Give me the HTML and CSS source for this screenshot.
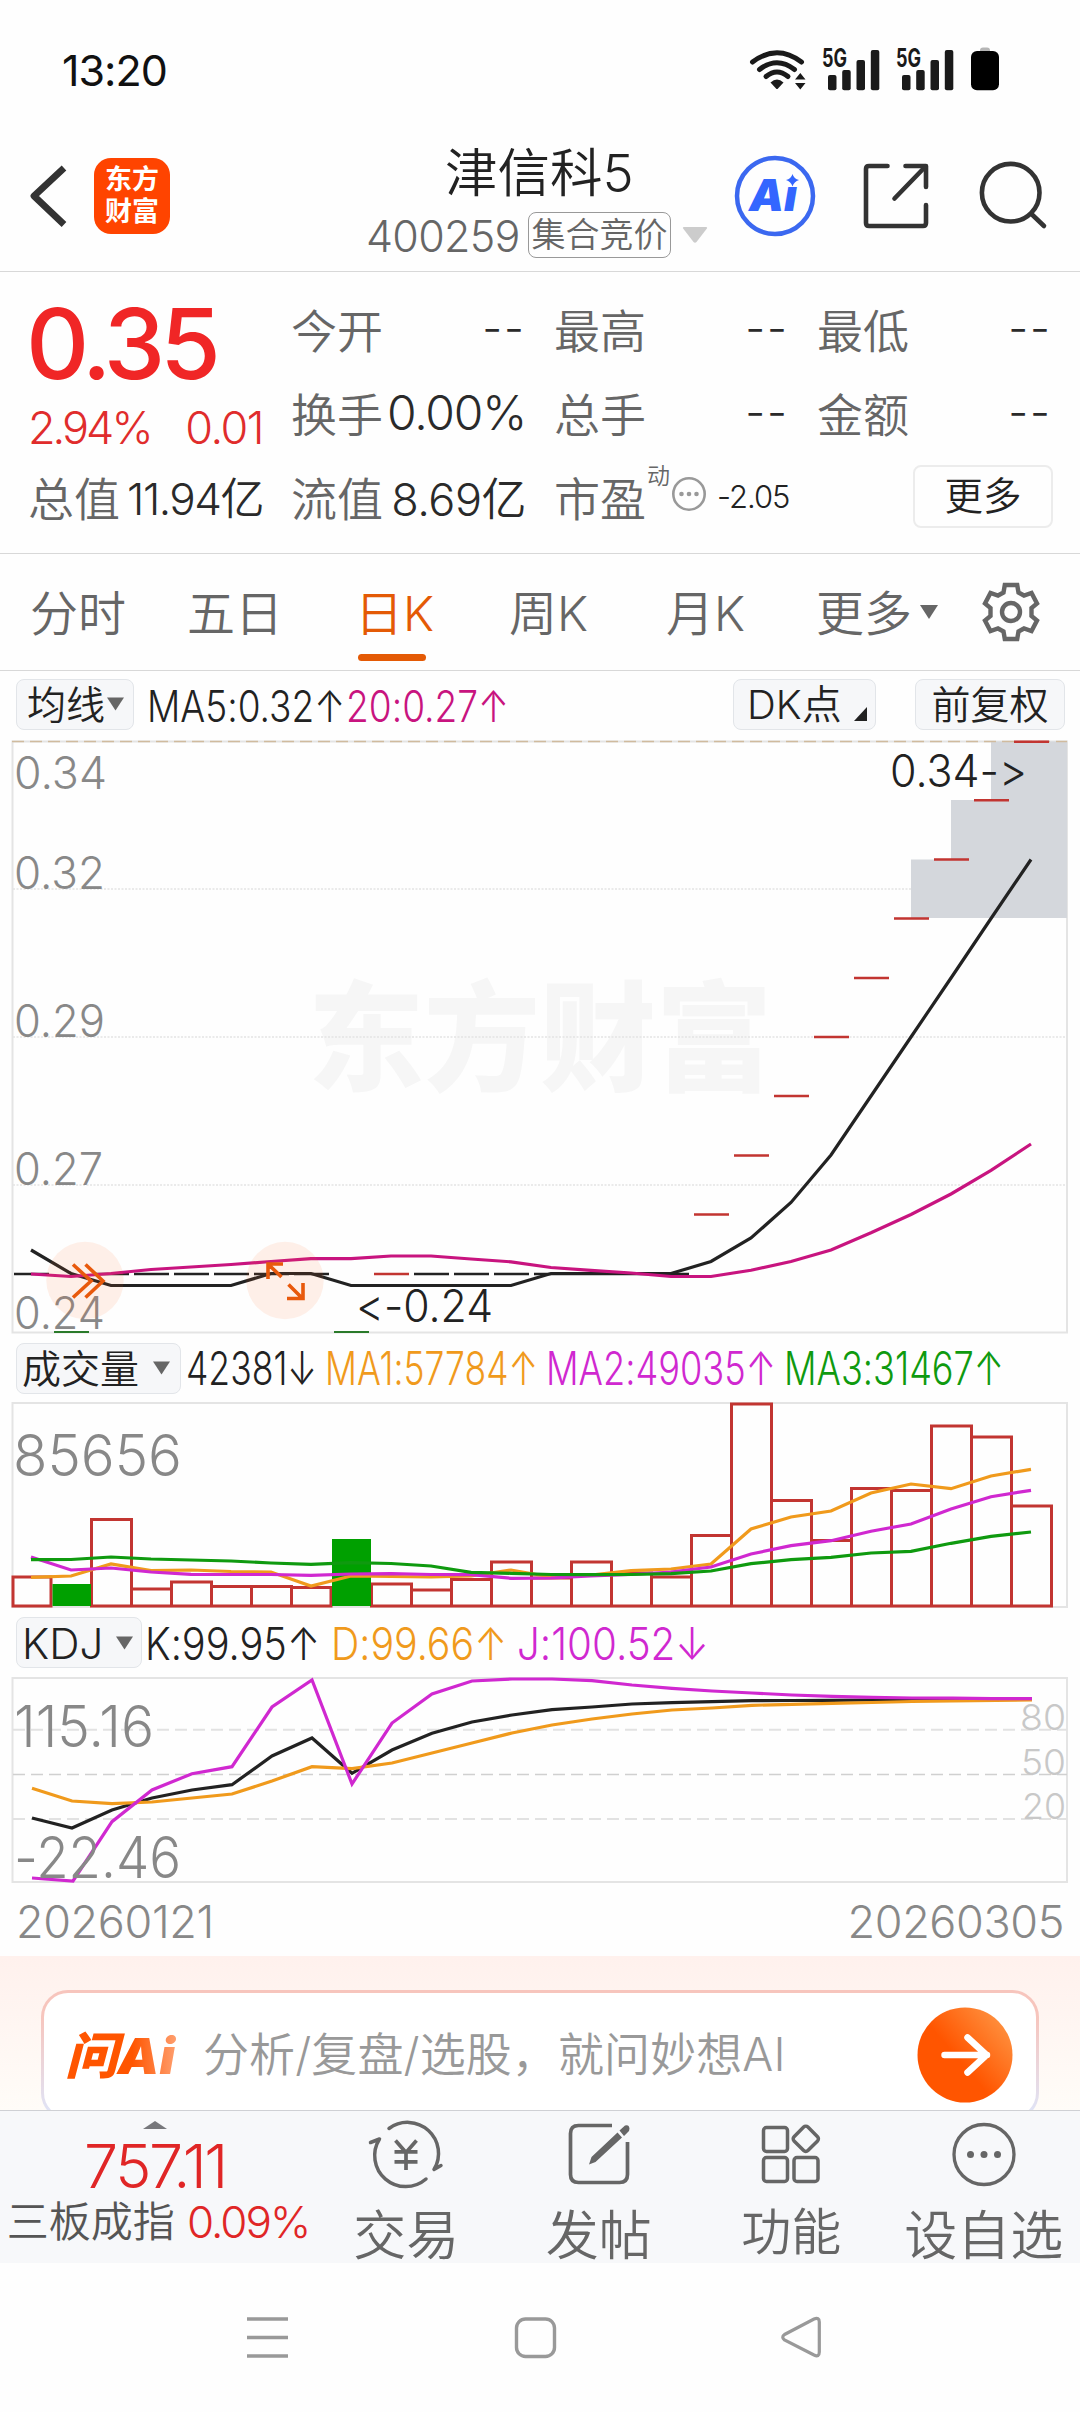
FILE: index.html
```html
<!DOCTYPE html>
<html lang="zh-CN">
<head>
<meta charset="utf-8">
<title>津信科5 400259</title>
<link rel="stylesheet" href="styles.css">
</head>
<body>
<div class="page">
  <div class="status">
    <span class="clock">13:20</span>
    <svg class="status-icons" viewBox="745 40 260 60" width="260" height="60">
      <g fill="none" stroke="#1a1a1a" stroke-width="5" stroke-linecap="round">
        <path d="M752.500 62 Q777 43.500 801.500 62"/><path d="M759.500 69.500 Q777 56 794.500 69.500"/><path d="M766 76.500 Q777 67.500 788 76.500"/>
      </g>
      <path d="M770.500 82.500 Q777 76.500 783.500 82.500 L778 88.500 Q777 89.500 776 88.500Z" fill="#1a1a1a"/>
      <path d="M800.300 73 L805.500 79.500 H795Z M795 83 H805.500 L800.300 89.500Z" fill="#1a1a1a"/>
      <g fill="#1a1a1a">
        <text x="822" y="67" class="net" textLength="25" lengthAdjust="spacingAndGlyphs">5G</text>
        <rect x="828" y="75" width="8.500" height="15.300" rx="2"/><rect x="842.200" y="70" width="8.500" height="20.300" rx="2"/><rect x="856.500" y="60" width="8.500" height="30.300" rx="2"/><rect x="870.800" y="50" width="8.500" height="40.300" rx="2"/>
        <text x="896" y="67" class="net" textLength="25" lengthAdjust="spacingAndGlyphs">5G</text>
        <rect x="902" y="75" width="8.500" height="15.300" rx="2"/><rect x="916.200" y="70" width="8.500" height="20.300" rx="2"/><rect x="930.500" y="60" width="8.500" height="30.300" rx="2"/><rect x="944.800" y="50" width="8.500" height="40.300" rx="2"/>
      </g>
      <rect x="980" y="47.500" width="10" height="7" rx="3" fill="#b5b5b5"/>
      <rect x="971" y="51" width="28" height="39.300" rx="6" fill="#000"/>
    </svg>
  </div>

  <header class="header">
    <svg class="back" viewBox="26 160 44 72" width="44" height="72"><path d="M64 168 L34 196 L64 224.500" fill="none" stroke="#333" stroke-width="6.800" stroke-linejoin="round"/></svg>
    <div class="brand"><span>东方</span><span>财富</span></div>
    <div class="title">
      <div class="name">津信科5</div>
      <div class="code-row"><span class="code">400259</span><span class="badge">集合竞价</span>
        <svg width="26" height="18" viewBox="0 0 26 18"><path d="M2 1 H24 Q26 1 24.500 3 L14.500 16 Q13 17.500 11.500 16 L1.500 3 Q0 1 2 1Z" fill="#ccc"/></svg></div>
    </div>
    <svg class="actions" viewBox="730 150 320 92" width="320" height="92">
      <circle cx="775" cy="196" r="38" fill="none" stroke="#3b68f0" stroke-width="4.500"/>
      <text x="749" y="210.500" class="ai-mark" textLength="48" lengthAdjust="spacingAndGlyphs">Aı</text>
      <path d="M792.500 174 Q794 179 799 180 Q794 181.500 792.500 186.500 Q791 181.500 786 180 Q791 179 792.500 174Z" fill="#3366ff"/>
      <g fill="none" stroke="#333" stroke-width="4.600" stroke-linecap="round" stroke-linejoin="round">
        <path d="M887.500 166 H869 Q866 166 866 169 V223 Q866 226 869 226 H923 Q926 226 926 223 V205"/>
        <path d="M905.500 166 H926 V187"/><path d="M894.500 198.500 L925 167"/>
        <circle cx="1010.700" cy="192.700" r="28.800"/><path d="M1032 214.500 L1044 226"/>
      </g>
    </svg>
  </header>

  <section class="quote">
    <div class="price-block">
      <div class="price">0.35</div>
      <div class="change"><span>2.94%</span><span class="diff">0.01</span></div>
    </div>
    <div class="cell"><span class="k">今开</span><span class="dash">--</span></div>
    <div class="cell"><span class="k">最高</span><span class="dash">--</span></div>
    <div class="cell"><span class="k">最低</span><span class="dash">--</span></div>
    <div class="cell"><span class="k">换手</span><span class="v rate">0.00%</span></div>
    <div class="cell"><span class="k">总手</span><span class="dash">--</span></div>
    <div class="cell"><span class="k">金额</span><span class="dash">--</span></div>
    <div class="cell"><span class="k">总值</span><span class="v">11.94亿</span></div>
    <div class="cell"><span class="k">流值</span><span class="v wide">8.69亿</span></div>
    <div class="cell pe"><span class="k">市盈</span><span class="sup">动</span>
      <svg width="36" height="36" viewBox="0 0 36 36"><circle cx="18" cy="18" r="15.700" fill="none" stroke="#999" stroke-width="2.600"/><g fill="#999"><circle cx="10.500" cy="18" r="2.300"/><circle cx="18" cy="18" r="2.300"/><circle cx="25.500" cy="18" r="2.300"/></g></svg>
      <span class="pe-val">-2.05</span></div>
    <div class="cell end"><span class="more">更多</span></div>
  </section>

  <nav class="tabs">
    <span class="tab">分时</span><span class="tab">五日</span><span class="tab on">日K</span><span class="tab">周K</span><span class="tab">月K</span>
    <span class="tab">更多<svg class="tri" width="18" height="14" viewBox="0 0 18 14"><path d="M0 0H18L9 14Z" fill="#666"/></svg></span>
    <svg class="gear" width="60" height="62" viewBox="-30 -31 60 62" fill="none" stroke="#666" stroke-width="4.400">
      <path d="M-6.200 -27 H6.200 L7.500 -19.500 L13 -16.500 L20.500 -19 L26 -8.500 L20.500 -4 V4 L26 8.500 L20.500 19 L13 16.500 L7.500 19.500 L6.200 27 H-6.200 L-7.500 19.500 L-13 16.500 L-20.500 19 L-26 8.500 L-20.500 4 V-4 L-26 -8.500 L-20.500 -19 L-13 -16.500 L-7.500 -19.500Z"/><circle r="9"/>
    </svg>
  </nav>

  <div class="legend first">
    <span class="chip avg"><span>均线</span><svg class="tri" width="17" height="14" viewBox="0 0 18 14"><path d="M0 0H18L9 14Z" fill="#666"/></svg></span>
    <svg class="legend-values" viewBox="134 671 480 66" width="480" height="66">
      <text x="147" y="722" font-size="43" fill="#222" textLength="198" lengthAdjust="spacingAndGlyphs">MA5:0.32↑</text>
      <text x="346" y="722" font-size="43" fill="#c8147f" textLength="163" lengthAdjust="spacingAndGlyphs">20:0.27↑</text>
    </svg>
    <span class="chip dk"><span>DK点</span><svg width="13" height="14" viewBox="0 0 13 14"><path d="M13 0V14H0Z" fill="#222"/></svg></span>
    <span class="chip fq"><span>前复权</span></span>
  </div>

  <svg class="chart" viewBox="0 737 1080 600" width="1080" height="600">
    <text x="308" y="1082" class="watermark" font-size="119" textLength="464" lengthAdjust="spacingAndGlyphs">东方财富</text>
    <rect x="12.500" y="741.500" width="1054.500" height="591" fill="none" stroke="#e4e4e4" stroke-width="2"/>
    <path d="M13 889H1067M13 1037H1067M13 1185H1067" stroke="#e4e4e4" stroke-width="1.300" stroke-dasharray="2 1.500"/>
    <path d="M991 741.500H1067V918H911V859.500H951V800H991Z" fill="#d4d7dc"/>
    <path d="M12 741.500H1067" stroke="#d0bb9e" stroke-width="1.300" stroke-dasharray="12 6"/>
    <g fill="#888" font-size="45">
      <text x="14" y="789" textLength="93" lengthAdjust="spacingAndGlyphs">0.34</text>
      <text x="14" y="889" textLength="91" lengthAdjust="spacingAndGlyphs">0.32</text>
      <text x="14" y="1037" textLength="91" lengthAdjust="spacingAndGlyphs">0.29</text>
      <text x="14" y="1185" textLength="89" lengthAdjust="spacingAndGlyphs">0.27</text>
      <text x="14" y="1329" textLength="91" lengthAdjust="spacingAndGlyphs">0.24</text>
    </g>
    <path d="M14 1274h35M94 1274h35M134 1274h35M174 1274h35M214 1274h35M254 1274h35M294 1274h35M414 1274h35M454 1274h35M494 1274h35M534 1274H689" stroke="#222" stroke-width="2.500"/>
    <path d="M54 1332h35M334 1332h35" stroke="#2a7a2a" stroke-width="2"/>
    <path d="M374 1274h35M694 1214.500h35M734 1155.500h35M774 1096h35M814 1037h35M854 978h35M894 918.500h35M934 859.500h35M974 800.200h35M1014 741.700h35" stroke="#c23531" stroke-width="2.500"/>
    <polyline fill="none" stroke="#222" stroke-width="3.200" points="31,1250 71,1273.500 111,1285.500 231,1285.500 271,1273.500 311,1273.500 351,1285.500 511,1285.500 551,1273.500 671,1273.500 711,1261.500 751,1238 791,1202.500 831,1155 871,1096 911,1037 951,978 991,918.500 1031,859.500"/>
    <polyline fill="none" stroke="#c8147f" stroke-width="3.200" points="31,1274 71,1276.500 111,1273.500 151,1269.500 191,1267 231,1264.500 271,1261.500 311,1258.700 351,1258.700 391,1256 431,1256 471,1259 511,1261.800 551,1267.500 591,1270.300 631,1273 671,1276.500 711,1276.500 751,1270.300 791,1261.500 831,1250 871,1232.800 911,1214.500 951,1194 991,1170.300 1031,1144"/>
    <circle cx="85" cy="1280.500" r="38.700" fill="#ff6a2a" opacity=".1"/><circle cx="285" cy="1280.500" r="38.700" fill="#ff6a2a" opacity=".1"/>
    <path d="M73 1264.500L91 1281L73 1297.500M85.500 1264.500L103 1281L85.500 1297.500M283 1264H268V1279M268 1264L281.500 1277M288.500 1284.500L302 1298M303 1283V1298.500H287" fill="none" stroke="#e8590c" stroke-width="3.600"/>
    <g fill="#222" font-size="45">
      <text x="356" y="1322" textLength="137" lengthAdjust="spacingAndGlyphs">&lt;-0.24</text>
      <text x="890" y="787" textLength="137" lengthAdjust="spacingAndGlyphs">0.34-&gt;</text>
    </g>
  </svg>

  <div class="legend second">
    <span class="chip vol"><span>成交量</span><svg class="tri" width="17" height="14" viewBox="0 0 18 14"><path d="M0 0H18L9 14Z" fill="#666"/></svg></span>
    <svg class="legend-values" viewBox="181 1337 880 62" width="880" height="62" font-size="46">
      <text x="186" y="1385" fill="#222" textLength="131" lengthAdjust="spacingAndGlyphs">42381↓</text>
      <text x="325" y="1385" fill="#f09a1c" textLength="213" lengthAdjust="spacingAndGlyphs">MA1:57784↑</text>
      <text x="546" y="1385" fill="#d028d0" textLength="230" lengthAdjust="spacingAndGlyphs">MA2:49035↑</text>
      <text x="784" y="1385" fill="#0f9a0f" textLength="220" lengthAdjust="spacingAndGlyphs">MA3:31467↑</text>
    </svg>
  </div>

  <svg class="chart" viewBox="0 1399 1080 212" width="1080" height="212">
    <rect x="12.500" y="1403" width="1054.500" height="204" fill="none" stroke="#e4e4e4" stroke-width="2"/>
    <text x="13" y="1476" font-size="57.500" fill="#888" textLength="169" lengthAdjust="spacingAndGlyphs">85656</text>
    <path fill="none" stroke="#c23531" stroke-width="3" d="M13 1606V1577H51V1606ZM91.500 1606V1519.500H131.500V1606ZM131.500 1606V1589H171.500V1606ZM171.500 1606V1582H211.500V1606ZM211.500 1606V1586.500H251.500V1606ZM251.500 1606V1586.500H291.500V1606ZM291.500 1606V1587.500H331V1606ZM371.500 1606V1584H411.500V1606ZM411.500 1606V1590H451.500V1606ZM451.500 1606V1579.500H491.500V1606ZM491.500 1606V1562H531.500V1606ZM531.500 1606V1578H571.500V1606ZM571.500 1606V1562H611.500V1606ZM611.500 1606V1573H651.500V1606ZM651.500 1606V1577H691.500V1606ZM691.500 1606V1535.500H731.500V1606ZM731.500 1606V1404H771.500V1606ZM771.500 1606V1500.500H811.500V1606ZM811.500 1606V1540.500H851.500V1606ZM851.500 1606V1488.500H891.500V1606ZM891.500 1606V1490.500H931.500V1606ZM931.500 1606V1426H971.500V1606ZM971.500 1606V1437H1011.500V1606ZM1011.500 1606V1506H1051.500V1606Z"/>
    <path d="M52.500 1584H91V1606H52.500ZM332 1539H371V1606H332Z" fill="#00a000"/>
    <g fill="none" stroke-width="3.200">
      <polyline stroke="#f09a1c" points="31,1577.300 71,1576 111,1564 151,1570.700 191,1570 231,1571.500 271,1572 311,1586 351,1576 391,1576.500 431,1577 471,1576 511,1570 551,1577 591,1575 631,1570.700 671,1569 711,1564 751,1529 791,1517 831,1511 871,1493 911,1484 951,1488.700 991,1476 1031,1469.300"/>
      <polyline stroke="#d028d0" points="31,1557 71,1570 111,1568 151,1572 191,1574.300 231,1574.500 271,1574.500 311,1575.300 351,1574 391,1573.700 431,1574.500 471,1574.700 511,1578.300 551,1578 591,1576 631,1574.500 671,1572 711,1567 751,1554 791,1545.700 831,1540.700 871,1531.300 911,1524 951,1509 991,1496.700 1031,1490.300"/>
      <polyline stroke="#0f9a0f" points="31,1559.700 71,1559.500 111,1557 151,1559 191,1560 231,1561 271,1563 311,1564.300 351,1562.700 391,1563.500 431,1566 471,1572.300 511,1573.300 551,1574.500 591,1574.700 631,1574.500 671,1573.700 711,1571 751,1563.700 791,1559.700 831,1557.300 871,1553 911,1551.300 951,1543.300 991,1536.300 1031,1532"/>
    </g>
  </svg>

  <div class="legend third">
    <span class="chip kdj"><span>KDJ</span><svg class="tri" width="17" height="14" viewBox="0 0 18 14"><path d="M0 0H18L9 14Z" fill="#666"/></svg></span>
    <svg class="legend-values" viewBox="142 1611 600 63" width="600" height="63" font-size="45">
      <text x="145" y="1660" fill="#222" textLength="175" lengthAdjust="spacingAndGlyphs">K:99.95↑</text>
      <text x="331" y="1660" fill="#f09a1c" textLength="176" lengthAdjust="spacingAndGlyphs">D:99.66↑</text>
      <text x="517" y="1660" fill="#d028d0" textLength="192" lengthAdjust="spacingAndGlyphs">J:100.52↓</text>
    </svg>
  </div>

  <svg class="chart" viewBox="0 1674 1080 212" width="1080" height="212">
    <rect x="12.500" y="1678" width="1054.500" height="204" fill="none" stroke="#e4e4e4" stroke-width="2"/>
    <path d="M13 1729.700H1067M13 1819H1067" stroke="#e2e2e2" stroke-width="2" stroke-dasharray="12 6"/>
    <path d="M13 1774.500H1067" stroke="#d0d0d0" stroke-width="1.300" stroke-dasharray="12 6"/>
    <g fill="none" stroke-width="3.200">
      <polyline stroke="#222" points="32,1818 72,1828 112,1810 152,1798 192,1790 232,1784.700 272,1756 312,1738 352,1773.300 392,1750 432,1733.300 472,1722 512,1715 552,1709.700 592,1707 632,1704 672,1702.700 712,1701.700 752,1700.700 792,1700.500 832,1700.300 872,1700 912,1699.500 1032,1699"/>
      <polyline stroke="#f09a1c" points="32,1788.300 72,1801 112,1803.700 152,1802 192,1798 232,1794 272,1781 312,1766.700 352,1768.700 392,1763 432,1753 472,1743 512,1733 552,1725 592,1719 632,1714 672,1710 712,1708 752,1705.300 792,1704.300 832,1703.300 872,1702.500 912,1701.500 952,1701 1032,1700"/>
      <polyline stroke="#d028d0" points="32,1878 73,1881 112,1821.700 152,1790 192,1773.700 232,1766.700 272,1707 312,1680 352,1784 392,1723 432,1694 472,1681 512,1679 552,1679 592,1680.700 632,1685 672,1688.300 712,1691 752,1693 792,1695 832,1696.300 872,1697.300 912,1698 952,1698.200 992,1698.700 1032,1698.700"/>
    </g>
    <g fill="#888" font-size="57">
      <text x="14" y="1747" textLength="140" lengthAdjust="spacingAndGlyphs">115.16</text>
      <text x="14" y="1878" textLength="167" lengthAdjust="spacingAndGlyphs">-22.46</text>
    </g>
    <g fill="#c8c8c8" font-size="36">
      <text x="1020" y="1730" textLength="46" lengthAdjust="spacingAndGlyphs">80</text>
      <text x="1021" y="1775" textLength="45" lengthAdjust="spacingAndGlyphs">50</text>
      <text x="1022" y="1819" textLength="44" lengthAdjust="spacingAndGlyphs">20</text>
    </g>
  </svg>

  <div class="dates"><span>20260121</span><span>20260305</span></div>

  <section class="ask">
    <div class="ask-box">
      <svg class="ask-logo" viewBox="62 2020 120 70" width="120" height="70">
        <defs><linearGradient id="lg" x1="0" x2="1"><stop offset=".6" stop-color="#ff5500"/><stop offset="1" stop-color="#ffa070"/></linearGradient></defs>
        <text x="65" y="2074" class="ask-mark" fill="url(#lg)" textLength="110" lengthAdjust="spacingAndGlyphs">问Ai</text>
      </svg>
      <span class="ask-text">分析/复盘/选股，就问妙想AI</span>
      <svg class="ask-go" viewBox="0 0 96 96" width="96" height="96">
        <defs><linearGradient id="go" x1=".2" y1=".7" x2=".9" y2=".1"><stop offset=".3" stop-color="#ff5500"/><stop offset="1" stop-color="#ff9240"/></linearGradient></defs>
        <circle cx="48" cy="48" r="47.500" fill="url(#go)"/>
        <path d="M27.500 48H70M50.500 30.500L69.500 48L50.500 65.500" fill="none" stroke="#fff" stroke-width="6.500" stroke-linecap="round" stroke-linejoin="round"/>
      </svg>
    </div>
  </section>

  <footer class="bar">
    <div class="index">
      <svg width="24" height="8" viewBox="0 0 24 8"><path d="M0 8L12 0L24 8Z" fill="#77787c"/></svg>
      <div class="index-val">757.11</div>
      <div class="index-row"><span>三板成指</span><span class="pct">0.09%</span></div>
    </div>
    <div class="act">
      <svg width="80" height="70" viewBox="366 2119 80 70" fill="none" stroke="#666" stroke-width="3.500" stroke-linecap="round" stroke-linejoin="round"><path d="M389 2128.500A31 31 0 0 1 434 2169.500L441 2165.500M426 2179A31 31 0 0 1 379.500 2139L370.500 2142.500"/><path d="M395.500 2140.500L406 2152.500L416.500 2140.500M406 2152.500V2170M394.500 2151.800H417.500M394.500 2161.800H417.500" stroke-linecap="butt" stroke-width="3.700"/></svg>
      <span>交易</span></div>
    <div class="act">
      <svg width="80" height="70" viewBox="558.500 2119 80 70" fill="none" stroke="#666" stroke-width="3.700"><path d="M611.500 2125.500H578Q570 2125.500 570 2133.500V2174.500Q570 2182.500 578 2182.500H619Q627 2182.500 627 2174.500V2142"/><path d="M619 2130.500l5.500-5q4-1.500 4.500 3l-.5 2.500l-5 5ZM617 2132.500l4.500 5L595 2162l-6.500 2.500l2.500-7.500Z" fill="#666" stroke="none"/></svg>
      <span>发帖</span></div>
    <div class="act small">
      <svg width="80" height="70" viewBox="751 2119 80 70" fill="none" stroke="#666" stroke-width="3.500"><rect x="763.500" y="2127.500" width="24" height="24" rx="3"/><rect x="763.500" y="2157.500" width="24" height="24" rx="3"/><rect x="794" y="2157.500" width="24" height="24" rx="3"/><rect x="796" y="2129" width="19.600" height="19.600" rx="3" transform="rotate(45 805.800 2138.800)"/></svg>
      <span>功能</span></div>
    <div class="act">
      <svg width="80" height="70" viewBox="943.500 2119 80 70" fill="none" stroke="#666" stroke-width="3.300"><circle cx="983.500" cy="2154.500" r="30"/><g fill="#666" stroke="none"><circle cx="970" cy="2154.500" r="3.500"/><circle cx="983.500" cy="2154.500" r="3.500"/><circle cx="997" cy="2154.500" r="3.500"/></g></svg>
      <span>设自选</span></div>
  </footer>

  <div class="sysnav">
    <svg viewBox="240 2310 60 56" width="60" height="56" fill="none" stroke="#999" stroke-width="3.400"><path d="M247 2319H288M247 2337.500H288M247 2356H288"/></svg>
    <svg viewBox="508 2310 56 56" width="56" height="56" fill="none" stroke="#999" stroke-width="3.400"><rect x="516.500" y="2319" width="38" height="37.500" rx="9"/></svg>
    <svg viewBox="774 2310 56 56" width="56" height="56" fill="none" stroke="#999" stroke-width="3.200"><path d="M784.500 2334.500L814 2319Q819.300 2317 819.300 2322V2352Q819.300 2357.500 814 2355L784.500 2340Q781 2337 784.500 2334.500Z"/></svg>
  </div>
</div>
</body>
</html>
```
FILE: styles.css
```css
* { box-sizing: border-box; }
html, body { margin: 0; padding: 0; background: #fff; }
body { font-family: Inter, "Noto Sans CJK SC", sans-serif; font-weight: 350; color: #222; }
svg { display: block; flex: none; }
.page { width: 1080px; height: 2412px; overflow: hidden; background: #fefefe; display: flex; flex-direction: column; }
.page > * { flex: none; }

.status { height: 110px; display: flex; justify-content: space-between; padding: 40px 75px 0 62px; }
.clock { font-size: 43px; line-height: 61px; font-weight: 400; letter-spacing: -1px; color: #111; }
.net { font-size: 25px; font-weight: 700; }

.header { height: 162px; border-bottom: 1px solid #d8d8d8; display: flex; align-items: flex-start; }
.back { margin: 50px 0 0 26px; }
.brand { margin: 48px 0 0 24px; width: 76px; height: 76px; border-radius: 17px; background: #ff4400; color: #fff; display: flex; flex-direction: column; align-items: center; justify-content: center; font-size: 27px; line-height: 32px; font-weight: 700; }
.title { margin-left: 196px; width: 346px; display: flex; flex-direction: column; align-items: flex-start; }
.name { margin: 33px 0 0 79px; font-size: 52.5px; line-height: 60px; white-space: nowrap; }
.code-row { display: flex; align-items: center; height: 46px; margin-top: 9px; color: #666; }
.code { font-size: 43px; letter-spacing: -0.7px; width: 162px; padding-top: 1px; }
.badge { width: 143px; height: 46px; border: 1.5px solid #999; border-radius: 8px; font-size: 34px; line-height: 44px; text-align: center; white-space: nowrap; }
.code-row svg { margin-left: 11px; }
.actions { margin: 40px 0 0 18px; }
.ai-mark { font-size: 44px; font-weight: 900; font-style: italic; fill: #3366ff; }

.quote { height: 282px; border-bottom: 1px solid #d8d8d8; padding: 14px 0 0 28px; display: grid; grid-template-columns: repeat(4, 235px); grid-template-rows: repeat(3, 84px); column-gap: 28px; }
.price-block { grid-row: span 2; color: #f02626; }
.price { font-size: 98px; line-height: 98px; margin: 9px 0 0 -2px; letter-spacing: -5px; font-weight: 480; }
.change { display: flex; justify-content: space-between; font-size: 45px; line-height: 54px; margin-top: 8px; letter-spacing: -3px; color: #e02c2c; }
.diff { letter-spacing: -1.5px; }
.cell { display: flex; align-items: center; justify-content: space-between; white-space: nowrap; }
.k { font-size: 46px; color: #666; }
.v { font-size: 44px; letter-spacing: -1.5px; color: #2a2a2a; }
.wide { font-size: 45px; letter-spacing: -0.5px; }
.rate { font-size: 48px; letter-spacing: -1.2px; }
.dash { font-size: 44px; color: #2a2a2a; letter-spacing: 2px; }
.pe { justify-content: flex-start; }
.sup { font-size: 23px; color: #666; align-self: flex-start; margin-left: 1px; padding-top: 3px; }
.pe svg { margin: -4px 0 0 1px; }
.pe-val { font-size: 31px; margin-left: 10px; letter-spacing: -1px; }
.end { justify-content: flex-end; }
.more { width: 140px; height: 63px; border: 2px solid #ececec; border-radius: 8px; font-size: 38.5px; line-height: 58px; text-align: center; margin-right: -1px; }

.tabs { height: 117px; border-bottom: 1px solid #d8d8d8; display: grid; grid-template-columns: 157px 168px 154px 157px 150px 165px 60px; align-items: center; padding-left: 30px; color: #666; }
.tab { font-size: 48px; line-height: 60px; white-space: nowrap; display: flex; align-items: center; position: relative; top: 2px; }
.tab .tri { margin-left: 8px; margin-top: -4px; }
.on { color: #e45a05; }
.on::after { content: ""; position: absolute; left: 3px; bottom: -17px; width: 68px; height: 7px; border-radius: 4px; background: #e45a05; }

.legend, .chart, .pe-val { font-variant-ligatures: none; font-feature-settings: "calt" 0; }
.legend { display: flex; align-items: center; padding-left: 16px; }
.first { height: 66px; } .second { height: 62px; } .third { height: 63px; }
.chip { height: 51px; background: #f6f7f9; border: 1.5px solid #e2e5e9; border-radius: 8px; display: flex; align-items: center; font-size: 39px; line-height: 46px; white-space: nowrap; flex: none; color: #222; }
.chip > span { padding-top: 2px; }
.avg { width: 118px; padding-left: 10px; } .avg .tri { margin-left: 2px; }
.dk { width: 143px; margin-left: 119px; padding-left: 13px; } .dk svg { margin: 20px 0 0 12px; }
.dk > span { font-size: 40px; }
.fq { width: 150px; margin-left: 39px; justify-content: center; }
.vol { width: 165px; padding-left: 5px; } .vol .tri { margin-left: 14px; }
.kdj { width: 126px; padding-left: 5px; font-size: 42px; } .kdj .tri { margin-left: 13px; }
.watermark { font-weight: 900; fill: #f6f6f6; }

.dates { height: 70px; display: flex; justify-content: space-between; padding: 8px 16px 0 16px; font-size: 45px; line-height: 56px; color: #888; letter-spacing: -0.4px; }

.ask { height: 154px; overflow: hidden; background: linear-gradient(#fff1ed, #fffcf8); padding: 34px 41px 0; }
.ask-box { height: 130px; border: 3px solid transparent; border-radius: 27px; background: linear-gradient(#fff, #fff) padding-box, linear-gradient(#f7c5bd 20%, #dfe4f7 95%) border-box; display: flex; align-items: center; padding-left: 18px; }
.ask-mark { font-size: 50px; font-weight: 900; font-style: italic; }
.ask-text { margin-left: 21px; font-size: 46px; letter-spacing: .1px; line-height: 60px; padding-bottom: 2px; color: #999; white-space: nowrap; width: 714px; }

.bar { height: 153px; background: #f7f8fa; border-top: 1px solid #cfd0d4; display: flex; overflow: hidden; color: #666; }
.index { width: 310px; display: flex; flex-direction: column; align-items: center; padding-top: 10px; }
.index-val { font-size: 61px; line-height: 60px; margin-top: 7px; letter-spacing: -2.4px; color: #e02626; }
.index-row { display: flex; font-size: 42px; line-height: 52px; align-items: center; white-space: nowrap; color: #555; padding-left: 6px; }
.pct { color: #e02626; margin-left: 12px; font-size: 44px; letter-spacing: -2px; }
.act { width: 192.5px; display: flex; flex-direction: column; align-items: center; padding-top: 8px; }
.act span { font-size: 53px; line-height: 60px; margin-top: 17px; white-space: nowrap; }
.small span { font-size: 50px; margin-top: 13px; }

.sysnav { flex: 1 1 auto; display: flex; padding: 47px 0 0 240px; }
.sysnav svg + svg { margin-left: 208px; }
.sysnav svg + svg + svg { margin-left: 210px; }
```
